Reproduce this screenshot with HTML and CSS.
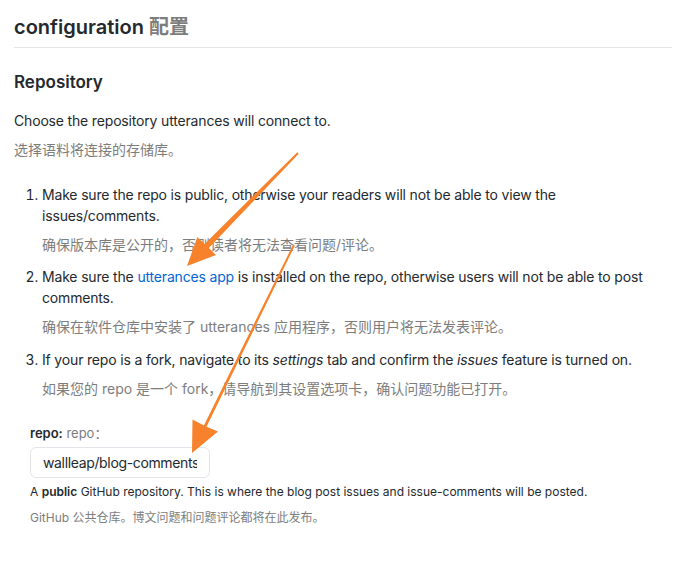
FILE: index.html
```html
<!DOCTYPE html>
<html lang="zh-CN">
<head>
<meta charset="utf-8">
<title>configuration 配置</title>
<link rel="stylesheet" href="styles.css">
</head>
<body>
<main class="page">
  <h2 class="title">configuration <span class="zh">配置</span></h2>
  <h3 class="subtitle">Repository</h3>
  <p class="text">Choose the repository utterances will connect to.</p>
  <p class="text zh">选择语料将连接的存储库。</p>
  <ol class="steps">
    <li class="step">
      <p class="text">Make sure the repo is public, otherwise your readers will not be able to view the issues/comments.</p>
      <p class="text zh">确保版本库是公开的，否则读者将无法查看问题/评论。</p>
    </li>
    <li class="step">
      <p class="text">Make sure the <a class="link" href="#">utterances app</a> is installed on the repo, otherwise users will not be able to post comments.</p>
      <p class="text zh">确保在软件仓库中安装了 utterances 应用程序，否则用户将无法发表评论。</p>
    </li>
    <li class="step">
      <p class="text">If your repo is a fork, navigate to its <em>settings</em> tab and confirm the <em>issues</em> feature is turned on.</p>
      <p class="text zh">如果您的 repo 是一个 fork，请导航到其设置选项卡，确认问题功能已打开。</p>
    </li>
  </ol>
  <div class="field">
    <label class="label" for="repo"><b>repo:</b> <span class="zh">repo：</span></label>
    <input class="input" id="repo" type="text" value="wallleap/blog-comments">
    <p class="note">A <b>public</b> GitHub repository. This is where the blog post issues and issue-comments will be posted.</p>
    <p class="note zh">GitHub 公共仓库。博文问题和问题评论都将在此发布。</p>
  </div>
</main>
<svg class="arrows" width="687" height="568" viewBox="0 0 687 568" aria-hidden="true">
  <polygon fill="#f7822b" points="297.3,152.3 298.7,153.7 208.8,248.1 216,255 187,266 197.4,237 204.6,243.9"/>
  <polygon fill="#f7822b" points="293.1,244.6 294.9,245.4 206.5,426.8 218,431.5 192,453 192.5,419.5 203.9,425.4"/>
</svg>
</body>
</html>
```

FILE: styles.css
```css
html, body {
  margin: 0;
  padding: 0;
  background: #ffffff;
}
body {
  font-family: Inter, "Noto Sans CJK SC", sans-serif;
  color: #24292e;
  position: relative;
  width: 687px;
  height: 568px;
  overflow: hidden;
}
.page {
  padding: 13px 15px 0 14px;
}
.zh {
  color: #7d7d7d;
  font-weight: 400;
  letter-spacing: 0;
}
.title {
  margin: 0;
  font-size: 20px;
  line-height: 28px;
  font-weight: 600;
  padding-bottom: 6px;
  border-bottom: 1px solid #e6e6e6;
}
.title .zh {
  font-weight: 600;
}
.subtitle {
  margin: 22px 0 0;
  font-size: 17px;
  line-height: 24px;
  font-weight: 600;
}
.text {
  margin: 0;
  font-size: 14px;
  line-height: 21px;
  letter-spacing: -0.17px;
}
.text.zh {
  margin-top: 8px;
  letter-spacing: 0;
}
.subtitle + .text {
  margin-top: 16px;
}
.steps {
  margin: 24px 0 0;
  padding-left: 28px;
  font-size: 14px;
  line-height: 21px;
}
.step + .step {
  margin-top: 12px;
}
.step:first-child + .step {
  margin-top: 11px;
}
.link {
  color: #0366d6;
  text-decoration: none;
}
.field {
  margin: 25px 0 0 16px;
}
.label {
  display: block;
  font-size: 13px;
  line-height: 18px;
}
.label b {
  font-weight: 600;
}
.input {
  display: block;
  box-sizing: border-box;
  margin-top: 5px;
  width: 180px;
  height: 31px;
  padding: 0 12px;
  border: 1px solid #e1e4e8;
  border-radius: 6px;
  font-family: Inter, sans-serif;
  font-size: 14px;
  letter-spacing: -0.35px;
  color: #24292e;
  background: #fff;
}
.note {
  margin: 5px 0 0;
  font-size: 12px;
  line-height: 18px;
}
.note b {
  font-weight: 600;
}
.note.zh {
  margin-top: 8px;
}
.arrows {
  position: absolute;
  left: 0;
  top: 0;
  pointer-events: none;
}
```
